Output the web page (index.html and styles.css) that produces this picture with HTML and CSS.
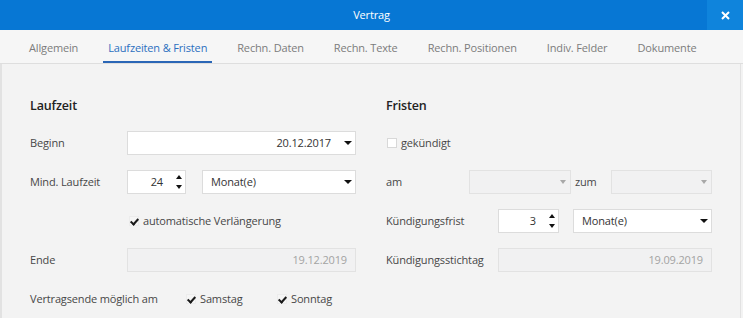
FILE: index.html
```html
<!DOCTYPE html>
<html lang="de">
<head>
<meta charset="utf-8">
<title>Vertrag</title>
<link rel="stylesheet" href="styles.css">
</head>
<body>
<div class="window">
  <header class="titlebar">
    <span class="title">Vertrag</span>
    <button class="close" type="button" aria-label="Schließen">
      <svg width="9" height="9" viewBox="0 0 9 9"><path d="M1 1 L8 8 M8 1 L1 8" stroke="#fff" stroke-width="2"/></svg>
    </button>
  </header>
  <nav class="tabs">
    <span class="tab">Allgemein</span>
    <span class="tab active">Laufzeiten &amp; Fristen</span>
    <span class="tab">Rechn. Daten</span>
    <span class="tab">Rechn. Texte</span>
    <span class="tab">Rechn. Positionen</span>
    <span class="tab">Indiv. Felder</span>
    <span class="tab">Dokumente</span>
  </nav>
  <main class="content">
    <section class="col col-left">
      <h2 class="heading">Laufzeit</h2>
      <div class="row">
        <span class="label w97">Beginn</span>
        <div class="field select w229 value-right">
          <span class="val">20.12.2017</span>
          <span class="arrow"></span>
        </div>
      </div>
      <div class="row">
        <span class="label w97">Mind. Laufzeit</span>
        <div class="field spin w59">
          <span class="val">24</span>
          <span class="spinbtns"><span class="up"></span><span class="down"></span></span>
        </div>
        <div class="field select w154 gap16">
          <span class="val">Monat(e)</span>
          <span class="arrow"></span>
        </div>
      </div>
      <div class="row">
        <span class="spacer w97"></span>
        <span class="check checked"></span>
        <span class="checktext">automatische Verlängerung</span>
      </div>
      <div class="row">
        <span class="label w97">Ende</span>
        <div class="field disabled w229 value-right"><span class="val">19.12.2019</span></div>
      </div>
      <div class="row">
        <span class="label w156">Vertragsende möglich am</span>
        <span class="check checked"></span>
        <span class="checktext w82">Samstag</span>
        <span class="check checked"></span>
        <span class="checktext">Sonntag</span>
      </div>
    </section>
    <section class="col col-right">
      <h2 class="heading">Fristen</h2>
      <div class="row">
        <span class="check unchecked"></span>
        <span class="checktext">gekündigt</span>
      </div>
      <div class="row">
        <span class="label w83">am</span>
        <div class="field select disabled w102"><span class="val"></span><span class="arrow"></span></div>
        <span class="label inner">zum</span>
        <div class="field select disabled w101"><span class="val"></span><span class="arrow"></span></div>
      </div>
      <div class="row">
        <span class="label w112">Kündigungsfrist</span>
        <div class="field spin w61">
          <span class="val">3</span>
          <span class="spinbtns"><span class="up"></span><span class="down"></span></span>
        </div>
        <div class="field select w139 gap14">
          <span class="val">Monat(e)</span>
          <span class="arrow"></span>
        </div>
      </div>
      <div class="row">
        <span class="label w112">Kündigungsstichtag</span>
        <div class="field disabled w214 value-right"><span class="val">19.09.2019</span></div>
      </div>
    </section>
  </main>
</div>
</body>
</html>
```

FILE: styles.css
```css
* { box-sizing: border-box; }
html, body { margin: 0; padding: 0; }
body {
  width: 743px;
  height: 318px;
  overflow: hidden;
  font-family: "Open Sans", "Noto Sans", sans-serif;
  font-size: 11px;
  letter-spacing: -0.15px;
  color: #474747;
  background: #f3f3f3;
}
.window { display: flex; flex-direction: column; height: 318px; }

.titlebar {
  height: 30px;
  background: #0777d4;
  display: flex;
  align-items: center;
  justify-content: center;
  position: relative;
  color: #fff;
}
.title { font-size: 11px; }
.close {
  position: absolute;
  right: 0;
  top: 0;
  width: 36px;
  height: 30px;
  border: 0;
  padding: 0;
  background: #0f84dc;
  display: flex;
  align-items: center;
  justify-content: center;
}

.tabs {
  height: 35px;
  background: #f6f6f6;
  border-bottom: 1px solid #dedede;
  display: flex;
  align-items: flex-start;
  gap: 20px;
  padding-left: 24px;
}
.tab {
  height: 33px;
  padding: 10px 5px 0;
  line-height: 16px;
  color: #7c7c7c;
  border-bottom: 2px solid transparent;
  white-space: nowrap;
}
.tab.active {
  color: #2c6fbf;
  border-bottom-color: #2a66b6;
}

.content {
  flex: 1;
  display: grid;
  grid-template-columns: 356px 1fr;
  grid-template-rows: max-content;
  padding: 32px 0 0 28px;
  border-left: 2px solid #e2e2e2;
  margin-right: 2px;
  border-right: 1px solid #e2e2e2;
  background: #f3f3f3;
}
.heading {
  margin: 0 0 7px;
  height: 20px;
  line-height: 20px;
  font-size: 12.5px;
  font-weight: 600;
  color: #222;
}
.row {
  height: 39px;
  display: flex;
  align-items: center;
}
.label { white-space: nowrap; flex: none; }
.label.inner { width: 40px; padding-left: 4px; }
.spacer { flex: none; }
.w97 { width: 97px; }
.w83 { width: 83px; }
.w112 { width: 112px; }
.w156 { width: 154px; }
.w82 { width: 75px; }
.w229 { width: 229px; }
.w59 { width: 59px; }
.w61 { width: 61px; }
.w154 { width: 154px; }
.w139 { width: 139px; }
.w102 { width: 102px; }
.w101 { width: 101px; }
.w214 { width: 214px; }
.gap16 { margin-left: 16px; }
.gap14 { margin-left: 14px; }

.field {
  flex: none;
  height: 24px;
  background: #fff;
  border: 1px solid #dcdcdc;
  display: flex;
  align-items: center;
  color: #333;
  position: relative;
}
.field .val { flex: 1; padding-left: 8px; white-space: nowrap; }
.field.value-right .val { text-align: right; padding-right: 13px; padding-left: 0; }
.field.disabled { background: #f1f1f2; border-color: #e2e2e2; color: #a3a3a3; }
.field.disabled.value-right .val { padding-right: 8px; }
.arrow {
  flex: none;
  width: 0;
  height: 0;
  margin-right: 3px;
  border-left: 4px solid transparent;
  border-right: 4px solid transparent;
  border-top: 4px solid #111;
}
.field.disabled .arrow {
  border-top-color: #a8a8a8;
  border-left-width: 3.5px;
  border-right-width: 3.5px;
  margin-right: 4px;
}

.field.spin .val { text-align: right; padding-right: 12px; padding-left: 0; }
.spinbtns {
  flex: none;
  width: 7px;
  margin-right: 3px;
  display: flex;
  flex-direction: column;
  align-items: center;
  gap: 6px;
}
.spinbtns .up, .spinbtns .down {
  width: 0; height: 0;
  border-left: 3.5px solid transparent;
  border-right: 3.5px solid transparent;
}
.spinbtns .up { border-bottom: 4px solid #111; }
.spinbtns .down { border-top: 4px solid #111; }

.check {
  flex: none;
  width: 10px;
  height: 10px;
  margin-left: 2px;
  margin-right: 4px;
  background: #fff;
  border: 1px solid #e4e4e4;
  position: relative;
}
.check.checked { background: #f5f5f5; border-color: #ececec; }
.check.checked::after {
  content: "";
  position: absolute;
  left: 1px;
  top: 0px;
  width: 3px;
  height: 6px;
  border-right: 2px solid #1a1a1a;
  border-bottom: 2px solid #1a1a1a;
  transform: translate(1px, 0) rotate(42deg);
}
.check.unchecked { border-color: #d8d8d8; }
.checktext { white-space: nowrap; flex: none; }
.col-right .row .check.unchecked { margin-left: 1px; }
```
